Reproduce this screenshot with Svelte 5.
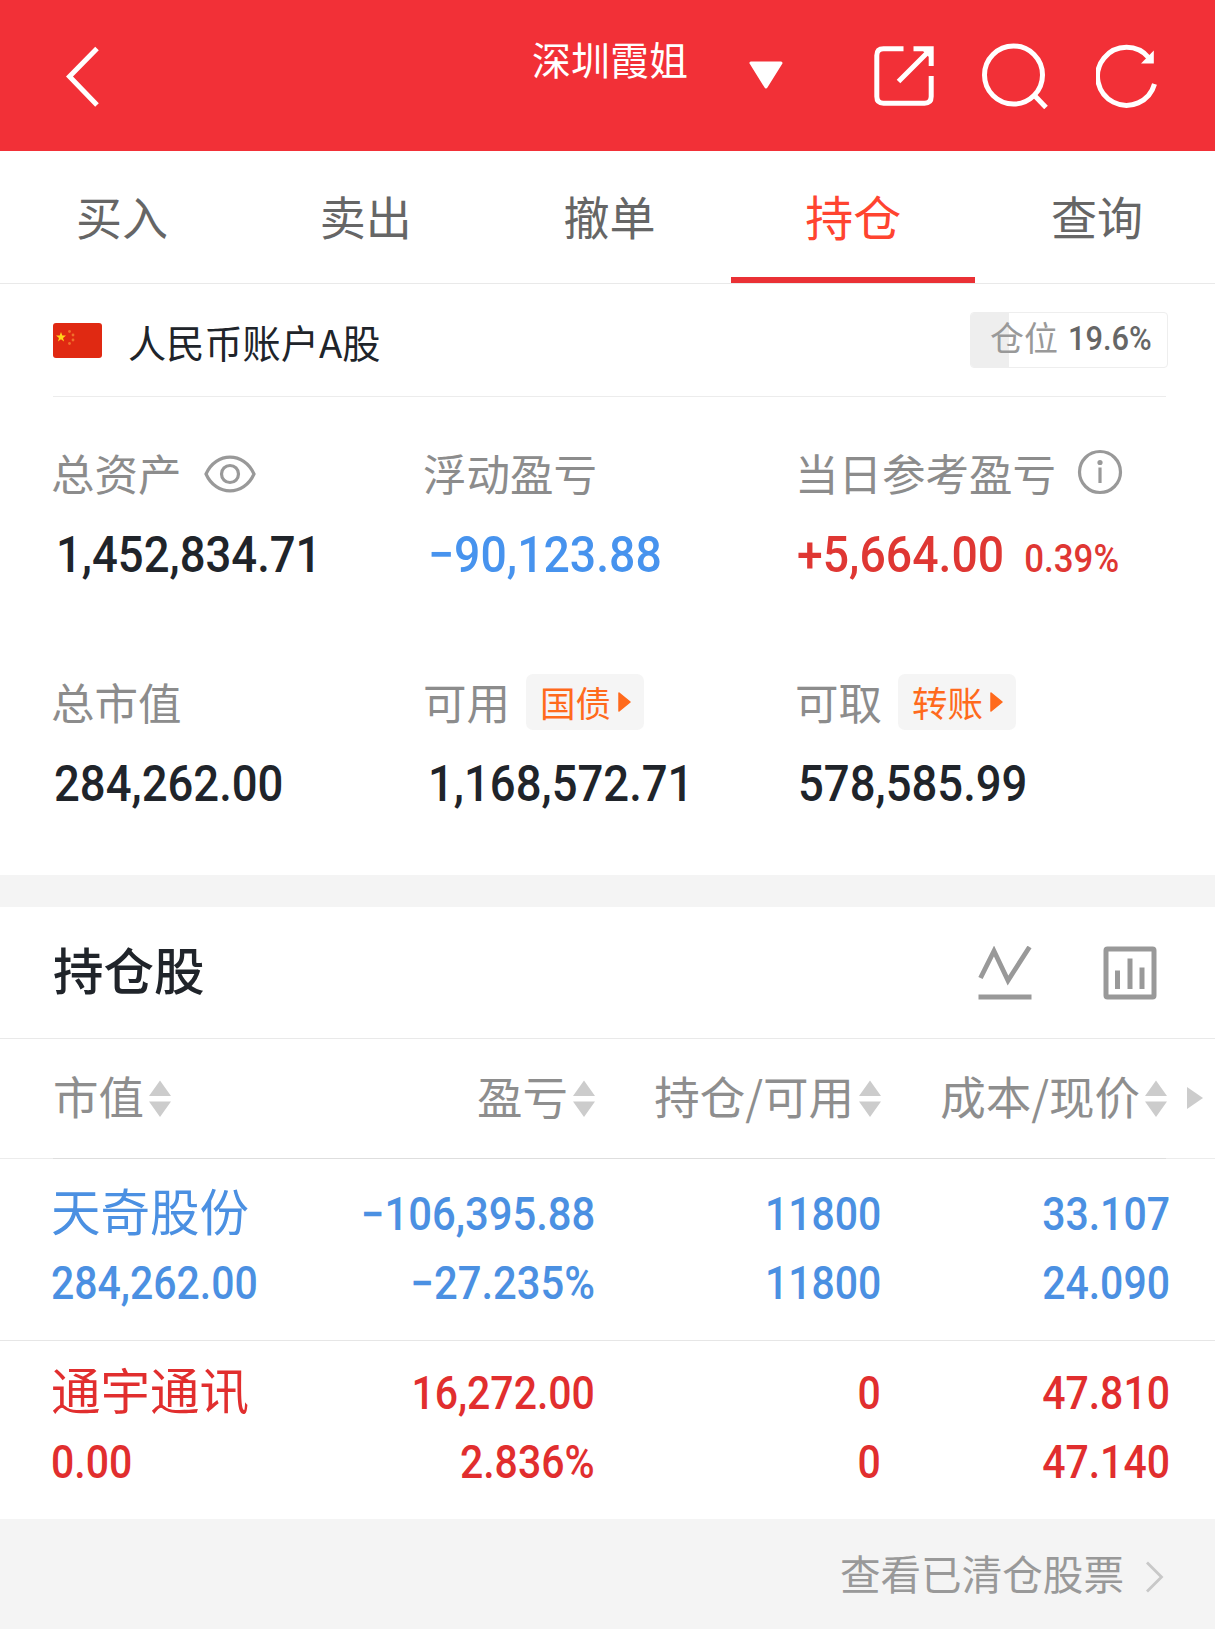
<script lang="ts">
  let activeTab = $state('持仓');
  let hidden = $state(false);

  const tabs = ['买入', '卖出', '撤单', '持仓', '查询'];
  const position = 19.6;
  const columns = ['市值', '盈亏', '持仓/可用', '成本/现价'];

  const holdings = [
    {
      name: '天奇股份',
      value: '284,262.00',
      trend: 'down',
      cells: [
        ['−106,395.88', '−27.235%'],
        ['11800', '11800'],
        ['33.107', '24.090']
      ]
    },
    {
      name: '通宇通讯',
      value: '0.00',
      trend: 'up',
      cells: [
        ['16,272.00', '2.836%'],
        ['0', '0'],
        ['47.810', '47.140']
      ]
    }
  ];

  function mask(value: string) {
    return hidden ? '****' : value;
  }
</script>

<svelte:head>
  <title>持仓</title>
</svelte:head>

<div class="app">
  <header class="header">
    <button class="icon-btn" aria-label="返回">
      <svg width="36" height="64" viewBox="0 0 36 64">
        <path d="M33 4.5 L5.5 32.5 L33 61" class="line" />
      </svg>
    </button>
    <h1 class="title">深圳霞姐</h1>
    <svg class="caret" width="34" height="28" viewBox="0 0 34 28">
      <path d="M2 2 H32 L17 26 Z" fill="#fff" stroke="#fff" stroke-width="3" stroke-linejoin="round" />
    </svg>
    <div class="actions">
      <button class="icon-btn" aria-label="分享">
        <svg width="60" height="60" viewBox="0 0 60 60">
          <path d="M29.5 2.8 H9.5 Q2.8 2.8 2.8 9.5 V50.5 Q2.8 57.2 9.5 57.2 H50.5 Q57.2 57.2 57.2 50.5 V30" class="line" />
          <path d="M39.5 2.8 H57.2 V20 M57 3 L24.5 35.5" class="line" />
          <path d="M48 4 H56 V12 Z" fill="#fff" />
        </svg>
      </button>
      <button class="icon-btn" aria-label="搜索">
        <svg width="66" height="66" viewBox="0 0 66 66">
          <circle cx="31.5" cy="32" r="29" class="line" />
          <path d="M52.5 52.5 L64 64.5" class="line" />
        </svg>
      </button>
      <button class="icon-btn" aria-label="刷新">
        <svg width="62" height="64" viewBox="0 0 62 64">
          <path d="M58.5 40 A29 29 0 1 1 53 14" class="line" />
          <path d="M57.8 6.5 V19.5 H45 Z" fill="#fff" />
        </svg>
      </button>
    </div>
  </header>

  <nav class="tabs">
    {#each tabs as tab}
      <button class="tab" class:active={tab === activeTab} onclick={() => (activeTab = tab)}>{tab}</button>
    {/each}
  </nav>

  <section class="account">
    <div class="account-head">
      <svg class="flag" width="49" height="35" viewBox="0 0 49 35">
        <rect width="49" height="35" rx="3" fill="#e02912" />
        <path d="M8 9 L9.3 12.6 H13 L10 14.9 L11.1 18.5 L8 16.3 L4.9 18.5 L6 14.9 L3 12.6 H6.7 Z" fill="#ffd51a" />
        <g fill="#f0702c">
          <circle cx="16.5" cy="8.5" r="1.4" />
          <circle cx="20" cy="12" r="1.4" />
          <circle cx="20" cy="17" r="1.4" />
          <circle cx="16.5" cy="20.5" r="1.4" />
        </g>
      </svg>
      <span class="account-name">人民币账户A股</span>
      <div class="position">
        <div class="position-fill" style="width: {position}%"></div>
        <span class="position-label">仓位</span>
        <span class="num position-num">{position}%</span>
      </div>
    </div>

    <div class="stats">
      <div class="stat">
        <div class="label">
          <span>总资产</span>
          <button class="icon-btn eye" aria-label="显示资产" onclick={() => (hidden = !hidden)}>
            <svg width="52" height="38" viewBox="0 0 52 38">
              <path d="M2 19 C12 -3.5 40 -3.5 50 19 C40 41.5 12 41.5 2 19 Z" class="grey-line" />
              <circle cx="26" cy="19" r="8.5" class="grey-line" />
            </svg>
          </button>
        </div>
        <div class="amount lead-one"><span class="num">{mask('1,452,834.71')}</span></div>
      </div>
      <div class="stat">
        <div class="label"><span>浮动盈亏</span></div>
        <div class="amount blue"><span class="num signed">{mask('−90,123.88')}</span></div>
      </div>
      <div class="stat">
        <div class="label">
          <span>当日参考盈亏</span>
          <svg class="info" width="46" height="46" viewBox="0 0 46 46">
            <circle cx="23" cy="23" r="20.5" class="grey-line" />
            <circle cx="23" cy="13.5" r="2.6" fill="#999" />
            <path d="M23 18.5 V34" class="grey-line" />
          </svg>
        </div>
        <div class="amount red"><span class="num signed">{mask('+5,664.00')}<small>0.39%</small></span></div>
      </div>
      <div class="stat">
        <div class="label"><span>总市值</span></div>
        <div class="amount"><span class="num">{mask('284,262.00')}</span></div>
      </div>
      <div class="stat">
        <div class="label">
          <span>可用</span>
          <button class="chip">
            国债
            <svg width="13" height="20" viewBox="0 0 13 20"><path d="M1 1 L12 10 L1 19 Z" class="play" /></svg>
          </button>
        </div>
        <div class="amount lead-one"><span class="num">{mask('1,168,572.71')}</span></div>
      </div>
      <div class="stat">
        <div class="label">
          <span>可取</span>
          <button class="chip">
            转账
            <svg width="13" height="20" viewBox="0 0 13 20"><path d="M1 1 L12 10 L1 19 Z" class="play" /></svg>
          </button>
        </div>
        <div class="amount"><span class="num">{mask('578,585.99')}</span></div>
      </div>
    </div>
  </section>

  <section class="holdings">
    <div class="section-head">
      <h2>持仓股</h2>
      <div class="section-icons">
        <svg width="54" height="54" viewBox="0 0 54 54">
          <path d="M2.5 32 L16 5 L30 34.5 L51.5 1" stroke="#999" stroke-width="4.8" fill="none" />
          <rect x="0.5" y="48.5" width="53" height="5" fill="#999" />
        </svg>
        <svg width="54" height="54" viewBox="0 0 54 54">
          <rect x="3" y="3" width="48" height="48" rx="1.5" stroke="#999" stroke-width="5" fill="none" />
          <path d="M14.5 24.5 V43 M27 12.5 V43 M39 21.5 V43" stroke="#999" stroke-width="5" />
        </svg>
      </div>
    </div>

    <div class="row table-head">
      {#each columns as column}
        <div class="col-title">
          <span>{column}</span>
          <svg width="22" height="38" viewBox="0 0 22 38">
            <path d="M11 0.5 L22 16 H0 Z M0 21.5 H22 L11 37 Z" fill="#ccc" />
          </svg>
        </div>
      {/each}
      <svg class="more" width="16" height="22" viewBox="0 0 16 22">
        <path d="M0 0 L16 11 L0 22 Z" fill="#ccc" />
      </svg>
    </div>

    {#each holdings as stock}
      <div class="row stock {stock.trend}">
        <div class="cell">
          <div class="stock-name">{stock.name}</div>
          <div class="num">{stock.value}</div>
        </div>
        {#each stock.cells as [top, bottom]}
          <div class="cell">
            <div class="num" class:signed={top.startsWith('−')}>{top}</div>
            <div class="num" class:signed={bottom.startsWith('−')}>{bottom}</div>
          </div>
        {/each}
      </div>
    {/each}
  </section>

  <footer class="footer">
    <span>查看已清仓股票</span>
    <svg width="19" height="32" viewBox="0 0 19 32">
      <path d="M2 1.5 L16.5 16 L2 30.5" stroke="#c8c8c8" stroke-width="2.8" fill="none" />
    </svg>
  </footer>
</div>

<style>
  :global(body) {
    margin: 0;
    background: #f4f4f4;
  }

  .app {
    width: 1215px;
    height: 1629px;
    display: flex;
    flex-direction: column;
    font-family: 'Noto Sans CJK SC', sans-serif;
    color: #20242a;
    background: #fff;
    overflow: hidden;
  }

  button {
    padding: 0;
    border: 0;
    background: none;
    font: inherit;
    color: inherit;
  }

  h1,
  h2 {
    margin: 0;
  }

  svg {
    display: block;
    flex: none;
  }

  .line {
    fill: none;
    stroke: #fff;
    stroke-width: 5;
  }

  .grey-line {
    fill: none;
    stroke: #999;
    stroke-width: 3.2;
  }

  /* digits are set slightly condensed */
  .num {
    display: inline-block;
    font-family: Roboto, sans-serif;
    font-weight: 500;
    white-space: nowrap;
    transform: scaleX(0.9);
    transform-origin: left center;
  }

  .num.signed {
    transform: scaleX(0.918);
  }

  .header {
    box-sizing: border-box;
    height: 151px;
    flex: none;
    display: flex;
    align-items: center;
    padding: 0 57px 0 64px;
    background: #f23037;
    color: #fff;
  }

  .title {
    margin-left: 432px;
    padding-bottom: 35px;
    font-size: 39px;
    line-height: 44px;
    font-weight: 400;
  }

  .caret {
    margin: -2px 0 0 61px;
  }

  .actions {
    display: flex;
    align-items: center;
    gap: 48px;
    margin-left: auto;
  }

  .tabs {
    box-sizing: border-box;
    width: 1219px;
    height: 133px;
    flex: none;
    display: grid;
    grid-template-columns: repeat(5, 1fr);
    border-bottom: 1px solid #e9e9e9;
  }

  .tab {
    box-sizing: border-box;
    padding-top: 1px;
    font-size: 46px;
    color: #666;
    border-bottom: 6px solid transparent;
  }

  .tab.active {
    font-size: 48px;
    color: #ff4430;
    border-bottom-color: #ea3135;
  }

  .account {
    height: 591px;
    flex: none;
  }

  .account-head {
    box-sizing: border-box;
    height: 113px;
    display: flex;
    align-items: center;
    margin: 0 49px 0 53px;
    border-bottom: 1px solid #ececec;
  }

  .account-name {
    margin: 4px 0 0 26px;
    font-size: 38.2px;
    line-height: 50px;
  }

  .position {
    position: relative;
    box-sizing: border-box;
    width: 198px;
    height: 56px;
    display: flex;
    align-items: center;
    margin: 0 -2px 0 auto;
    padding-left: 19px;
    border: 1px solid #eee;
    border-radius: 4px;
    overflow: hidden;
  }

  .position-fill {
    position: absolute;
    inset: 0 auto 0 0;
    background: #eee;
  }

  .position-label {
    position: relative;
    margin-top: -6px;
    font-size: 34px;
    line-height: 44px;
    color: #999;
  }

  .num.position-num {
    margin: -4px 0 0 10px;
    font-size: 33.5px;
    color: #666;
    transform: scaleX(0.92);
  }

  .stats {
    display: grid;
    grid-template-columns: 372px 372px 1fr;
    grid-auto-rows: 229px;
    padding: 43px 0 0 51px;
  }

  .label {
    display: flex;
    align-items: center;
    height: 62px;
    font-size: 43.5px;
    line-height: 62px;
    color: #8c8c8c;
  }

  .label span {
    padding-top: 3px;
  }

  .eye {
    margin: 5px 0 0 22px;
  }

  .info {
    margin: 2px 0 0 21px;
  }

  .amount {
    height: 60px;
    margin-top: 18px;
    padding-left: 3px;
    font-size: 50.5px;
    line-height: 60px;
  }

  .amount.lead-one {
    padding-left: 5px;
  }

  .amount small {
    margin-left: 22px;
    font-size: 38px;
  }

  .amount.blue {
    padding-left: 5px;
    color: #4793ee;
  }

  .amount.red {
    padding-left: 2px;
    color: #df3733;
  }

  .chip {
    display: flex;
    align-items: center;
    gap: 7px;
    height: 56px;
    margin: 4px 0 0 16px;
    padding: 0 13px 0 14px;
    border-radius: 7px;
    background: #f5f5f5;
    font-size: 35.5px;
    line-height: 56px;
    color: #ff6a1c;
  }

  .play {
    fill: #ff6a1c;
    stroke: #ff6a1c;
    stroke-width: 1.5;
    stroke-linejoin: round;
  }

  .holdings {
    border-top: 32px solid #f4f4f4;
  }

  .section-head {
    box-sizing: border-box;
    height: 132px;
    display: flex;
    align-items: center;
    justify-content: space-between;
    padding: 0 58px 0 53px;
    border-bottom: 1px solid #e9e9e9;
  }

  h2 {
    padding-bottom: 10px;
    font-size: 50.5px;
    line-height: 60px;
    font-weight: 500;
  }

  .section-icons {
    display: flex;
    gap: 71px;
  }

  .row {
    box-sizing: border-box;
    display: grid;
    grid-template-columns: 243px 301px 286px 289px;
    padding-left: 51px;
  }

  .table-head {
    position: relative;
    height: 120px;
    border-bottom: 1px solid #ececec;
  }

  .table-head::after {
    content: '';
    position: absolute;
    left: 53px;
    right: 49px;
    bottom: -1px;
    height: 1px;
    background: #dedede;
  }

  .col-title {
    display: flex;
    align-items: center;
    justify-content: flex-end;
    gap: 5px;
    font-size: 45.5px;
    line-height: 60px;
    color: #8e8e8e;
    white-space: nowrap;
  }

  .col-title span {
    padding-bottom: 8px;
  }

  .col-title:first-child {
    justify-content: flex-start;
    padding-left: 2px;
  }

  .col-title:nth-child(4) {
    padding-right: 3px;
  }

  .more {
    position: absolute;
    right: 12px;
    top: 48px;
  }

  .stock {
    height: 182px;
    padding-top: 21px;
    border-bottom: 1px solid #e6e6e6;
    font-size: 45.5px;
    line-height: 69px;
  }

  .stock:last-child {
    height: 178px;
    padding-top: 18px;
    border-bottom: 0;
  }

  .cell {
    display: flex;
    flex-direction: column;
    align-items: flex-end;
  }

  .cell .num {
    transform-origin: right center;
  }

  .cell:first-child {
    align-items: flex-start;
  }

  .cell:first-child .num {
    transform-origin: left center;
  }

  .stock-name {
    height: 69px;
    font-size: 49.5px;
    line-height: 60px;
    white-space: nowrap;
  }

  .down {
    color: #4b90e2;
  }

  .up {
    color: #e12e2e;
  }

  .footer {
    flex: 1;
    display: flex;
    align-items: center;
    justify-content: flex-end;
    gap: 21px;
    padding: 2px 51px 0 0;
    background: #f4f4f4;
    font-size: 40.6px;
    color: #999;
  }

  .footer span {
    padding-bottom: 6px;
  }

  .footer svg {
    margin-top: 4px;
  }
</style>
